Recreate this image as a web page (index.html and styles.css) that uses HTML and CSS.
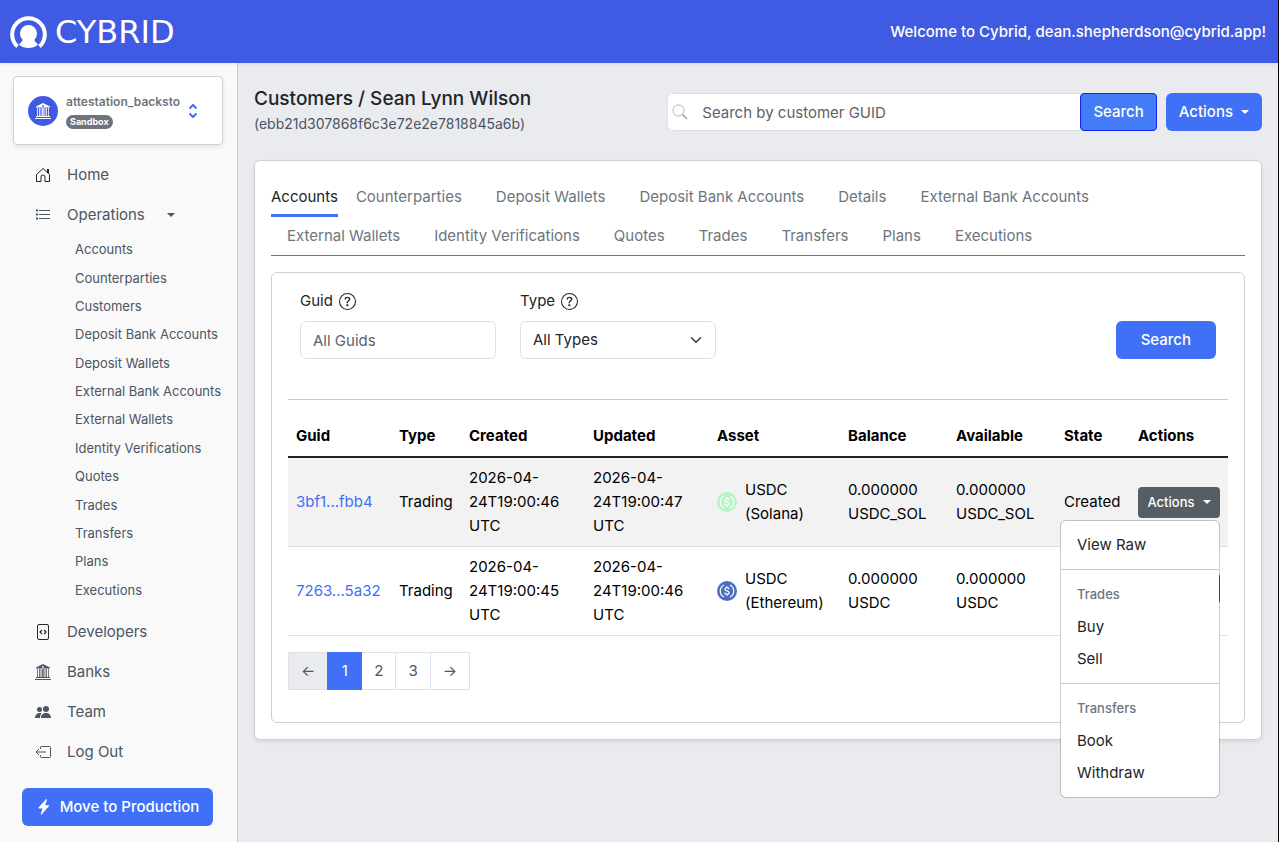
FILE: index.html
```html
<!DOCTYPE html>
<html lang="en">
<head>
    <meta charset="UTF-8">
    <meta name="viewport" content="width=device-width, initial-scale=1.0">
    <title>Cybrid - Customer Accounts</title>
    <link rel="stylesheet" href="styles.css">
</head>
<body>
    <!-- shared shapes -->
    <svg class="sprite" width="0" height="0" aria-hidden="true">
        <symbol id="museum" viewBox="0 0 16 16">
            <path fill="currentColor" fill-rule="evenodd" d="M8 0 15 3.6v1H1v-1zM8 2a.9.9 0 1 0 0 1.8A.9.9 0 0 0 8 2z"/>
            <path fill="none" stroke="currentColor" stroke-width=".8" d="M2.5 5v8M4.500 5v8M6 5v8M7.500 5v8M8.600 5v8M10 5v8M11.500 5v8M13.500 5v8"/>
            <path fill="currentColor" d="M1 13h14v1H1zM0 15h16v1H0z"/>
        </symbol>
        <symbol id="question" viewBox="0 0 16 16">
            <path fill="currentColor" d="M8 15A7 7 0 1 1 8 1a7 7 0 0 1 0 14m0 1A8 8 0 1 0 8 0a8 8 0 0 0 0 16"/>
            <path fill="currentColor" d="M5.255 5.786a.237.237 0 0 0 .241.247h.825c.138 0 .248-.113.266-.25.09-.656.54-1.134 1.342-1.134.686 0 1.314.343 1.314 1.168 0 .635-.374.927-.965 1.371-.673.489-1.206 1.06-1.168 1.987l.003.217a.25.25 0 0 0 .25.246h.811a.25.25 0 0 0 .25-.25v-.105c0-.718.273-.927 1.01-1.486.609-.463 1.244-.977 1.244-2.056 0-1.511-1.276-2.241-2.673-2.241-1.267 0-2.655.59-2.75 2.286m1.557 5.763c0 .533.425.927 1.01.927.609 0 1.028-.394 1.028-.927 0-.552-.42-.94-1.029-.94-.584 0-1.009.388-1.009.94"/>
        </symbol>
        <symbol id="coin" viewBox="0 0 20 20">
            <circle cx="10" cy="10" r="10" fill="currentColor"/>
            <path d="M7 4a6.700 6.700 0 0 0 0 12M13 4a6.700 6.700 0 0 1 0 12" fill="none" stroke="#fff" stroke-width="1.200"/>
            <path d="M12 8.200c0-1-.8-1.500-2-1.500s-2 .5-2 1.500c0 2.200 4.100 1.200 4.100 3.500 0 1-.9 1.600-2.100 1.600s-2.100-.6-2.100-1.700M10 5.300v1.400M10 13.300v1.400" fill="none" stroke="#fff" stroke-width="1.200"/>
        </symbol>
    </svg>

    <header class="topbar">
        <a class="brand" href="#">
            <svg width="37" height="34" viewBox="0 0 37 34" aria-hidden="true">
                <path d="M7.500 31.500A16.300 16.300 0 1 1 29.500 31.500" fill="none" stroke="#fff" stroke-width="4"/>
                <circle cx="18.500" cy="18.500" r="8.500" fill="#fff"/>
                <path d="M13 23C13 27 10 27.500 9 29.800 12 32.300 15 33 18.500 33s6.500-.7 9.500-3.200C27 27.500 24 27 24 23z" fill="#fff"/>
            </svg>
            <span class="brand__name">CYBRID</span>
        </a>
        <p class="welcome">Welcome to Cybrid, dean.shepherdson@cybrid.app!</p>
    </header>

    <div class="layout">
        <aside class="sidebar">
            <button class="org" type="button">
                <span class="org__icon"><svg width="16" height="16"><use href="#museum"/></svg></span>
                <span class="org__text">
                    <span class="org__name">attestation_backsto</span>
                    <span class="badge">Sandbox</span>
                </span>
                <svg class="org__arrows" width="8" height="14" viewBox="0 0 8 14" fill="none" stroke="#3f6ff5" stroke-width="2">
                    <path d="M.5 4.500L4 1l3.500 3.500M.5 9.500L4 13l3.500-3.500"/>
                </svg>
            </button>

            <nav class="menu">
                <a class="menu__link" href="#">
                    <svg width="16" height="16" viewBox="0 0 16 16" fill="none" stroke="#212529"><path d="M1.500 7.500V14.500H6V10a2 2 0 0 1 4 0v4.500h4.500V7.500L8 1.500z"/><path stroke-width="2" d="M13 6V2"/></svg>
                    Home
                </a>
                <a class="menu__link" href="#">
                    <svg width="16" height="16" viewBox="0 0 16 16" fill="none" stroke="currentColor"><path d="M4 3.500h11M4 7.500h11M4 11.500h11"/><path stroke-width="2" d="M1 3.500h2M1 7.500h2M1 11.500h2"/></svg>
                    Operations
                    <span class="caret"></span>
                </a>
                <div class="submenu">
                    <a href="#">Accounts</a>
                    <a href="#">Counterparties</a>
                    <a href="#">Customers</a>
                    <a href="#">Deposit Bank Accounts</a>
                    <a href="#">Deposit Wallets</a>
                    <a href="#">External Bank Accounts</a>
                    <a href="#">External Wallets</a>
                    <a href="#">Identity Verifications</a>
                    <a href="#">Quotes</a>
                    <a href="#">Trades</a>
                    <a href="#">Transfers</a>
                    <a href="#">Plans</a>
                    <a href="#">Executions</a>
                </div>
                <a class="menu__link" href="#">
                    <svg width="16" height="16" viewBox="0 0 16 16" fill="none" stroke="#212529"><rect x="2.500" y=".5" width="11" height="15" rx="1.500"/><path stroke-width="1.200" d="M7 6L5 8l2 2M9 6l2 2-2 2"/></svg>
                    Developers
                </a>
                <a class="menu__link" href="#">
                    <svg width="16" height="16"><use href="#museum"/></svg>
                    Banks
                </a>
                <a class="menu__link" href="#">
                    <svg width="16" height="16" viewBox="0 0 16 16" fill="currentColor"><circle cx="11" cy="5" r="3"/><circle cx="4.500" cy="5.500" r="2.500"/><path d="M6 14c0-3 2-5 5-5s5 2 5 5zM0 14c0-3 2-5 4.500-5 .8 0 1.500.1 2 .4C5.500 10.500 5 12 5 14z"/></svg>
                    Team
                </a>
                <a class="menu__link" href="#">
                    <svg width="16" height="16" viewBox="0 0 16 16" fill="none" stroke="currentColor"><path d="M5.500 5V3a1 1 0 0 1 1-.5h8a1 1 0 0 1 1 1v9a1 1 0 0 1-1 1h-8a1 1 0 0 1-1-1V11M11 8H1M4 5L1 8l3 3"/></svg>
                    Log Out
                </a>
            </nav>

            <button class="btn btn--primary btn--move" type="button">
                <svg width="16" height="16" viewBox="0 0 16 16" fill="currentColor"><path d="M10.700.2a.5.5 0 0 1 .3.600L9.200 6.300h3.500a.5.5 0 0 1 .4.800l-7.500 8.500a.5.5 0 0 1-.8-.500L6.600 9.400H3a.5.5 0 0 1-.4-.800L10 .300a.5.5 0 0 1 .7-.1z"/></svg>
                Move to Production
            </button>
        </aside>

        <main class="content">
            <div class="page-head">
                <div>
                    <h1 class="page-head__title">Customers / Sean Lynn Wilson</h1>
                    <p class="page-head__guid">(ebb21d307868f6c3e72e2e7818845a6b)</p>
                </div>
                <form class="find">
                    <div class="find__box">
                        <svg width="16" height="16" viewBox="0 0 16 16" fill="none" stroke="#adb5bd"><circle cx="6.500" cy="6.500" r="5.500"/><path stroke-width="2" d="M10.500 10.500l4.500 4.500"/></svg>
                        <input type="text" placeholder="Search by customer GUID" aria-label="Search by customer GUID">
                        <button class="btn btn--focus" type="submit">Search</button>
                    </div>
                    <button class="btn btn--primary" type="button">Actions <span class="caret"></span></button>
                </form>
            </div>

            <section class="card">
                <ul class="tabs">
                    <li><a class="tab tab--active" href="#">Accounts</a></li>
                    <li><a class="tab" href="#">Counterparties</a></li>
                    <li><a class="tab" href="#">Deposit Wallets</a></li>
                    <li><a class="tab" href="#">Deposit Bank Accounts</a></li>
                    <li><a class="tab" href="#">Details</a></li>
                    <li><a class="tab" href="#">External Bank Accounts</a></li>
                    <li><a class="tab" href="#">External Wallets</a></li>
                    <li><a class="tab" href="#">Identity Verifications</a></li>
                    <li><a class="tab" href="#">Quotes</a></li>
                    <li><a class="tab" href="#">Trades</a></li>
                    <li><a class="tab" href="#">Transfers</a></li>
                    <li><a class="tab" href="#">Plans</a></li>
                    <li><a class="tab" href="#">Executions</a></li>
                </ul>

                <div class="panel">
                    <form class="filters">
                        <div class="field">
                            <label for="guid">Guid <svg width="17" height="17"><use href="#question"/></svg></label>
                            <input class="control" id="guid" type="text" placeholder="All Guids">
                        </div>
                        <div class="field">
                            <label for="type">Type <svg width="17" height="17"><use href="#question"/></svg></label>
                            <div class="select">
                                <select class="control" id="type">
                                    <option>All Types</option>
                                </select>
                                <svg class="select__arrow" width="16" height="12" viewBox="0 0 16 16" fill="none" stroke="#343a40" stroke-width="2" stroke-linecap="round" stroke-linejoin="round"><path d="M2 5l6 6 6-6"/></svg>
                            </div>
                        </div>
                        <button class="btn btn--primary btn--wide" type="submit">Search</button>
                    </form>

                    <table class="table">
                        <colgroup>
                            <col class="col-guid">
                            <col class="col-type">
                            <col class="col-date">
                            <col class="col-date">
                            <col class="col-asset">
                            <col class="col-amount">
                            <col class="col-amount">
                            <col class="col-state">
                            <col class="col-actions">
                        </colgroup>
                        <thead>
                            <tr>
                                <th>Guid</th>
                                <th>Type</th>
                                <th>Created</th>
                                <th>Updated</th>
                                <th>Asset</th>
                                <th>Balance</th>
                                <th>Available</th>
                                <th>State</th>
                                <th>Actions</th>
                            </tr>
                        </thead>
                        <tbody>
                            <tr class="row--striped">
                                <td><a href="#">3bf1...fbb4</a></td>
                                <td>Trading</td>
                                <td>2026-04-24T19:00:46 UTC</td>
                                <td>2026-04-24T19:00:47 UTC</td>
                                <td>
                                    <div class="asset">
                                        <svg class="coin--solana" width="20" height="20"><use href="#coin"/></svg>
                                        <span>USDC (Solana)</span>
                                    </div>
                                </td>
                                <td>0.000000 USDC_SOL</td>
                                <td>0.000000 USDC_SOL</td>
                                <td>Created</td>
                                <td>
                                    <div class="dropdown">
                                        <button class="btn btn--small" type="button" aria-expanded="true">Actions <span class="caret"></span></button>
                                        <div class="dropdown__menu">
                                            <a class="dropdown__item" href="#">View Raw</a>
                                            <hr>
                                            <h6>Trades</h6>
                                            <a class="dropdown__item" href="#">Buy</a>
                                            <a class="dropdown__item" href="#">Sell</a>
                                            <hr>
                                            <h6>Transfers</h6>
                                            <a class="dropdown__item" href="#">Book</a>
                                            <a class="dropdown__item" href="#">Withdraw</a>
                                        </div>
                                    </div>
                                </td>
                            </tr>
                            <tr>
                                <td><a href="#">7263...5a32</a></td>
                                <td>Trading</td>
                                <td>2026-04-24T19:00:45 UTC</td>
                                <td>2026-04-24T19:00:46 UTC</td>
                                <td>
                                    <div class="asset">
                                        <svg class="coin--ethereum" width="20" height="20"><use href="#coin"/></svg>
                                        <span>USDC (Ethereum)</span>
                                    </div>
                                </td>
                                <td>0.000000 USDC</td>
                                <td>0.000000 USDC</td>
                                <td></td>
                                <td>
                                    <button class="btn btn--small" type="button" aria-label="Actions"></button>
                                </td>
                            </tr>
                        </tbody>
                    </table>

                    <nav class="pagination" aria-label="Pages">
                        <a class="page page--disabled" href="#">←</a>
                        <a class="page page--active" href="#">1</a>
                        <a class="page" href="#">2</a>
                        <a class="page" href="#">3</a>
                        <a class="page" href="#">→</a>
                    </nav>
                </div>
            </section>
        </main>
    </div>
</body>
</html>
```
FILE: styles.css
```css
* {
    box-sizing: border-box;
    margin: 0;
    padding: 0;
}

body {
    display: flex;
    flex-direction: column;
    min-height: 100vh;
    background-color: #eaebef;
    border-right: 1px solid #000;
    font-family: Inter, 'Liberation Sans', sans-serif;
    font-size: 15px;
    line-height: 24px;
    color: #212529;
}

a {
    color: inherit;
    text-decoration: none;
}

svg {
    display: block;
    flex-shrink: 0;
}

button,
input,
select {
    font: inherit;
}

.sprite {
    position: absolute;
}

/* Top bar */
.topbar {
    position: relative;
    display: flex;
    justify-content: space-between;
    align-items: center;
    height: 63px;
    padding: 0 12px 0 10px;
    background-color: #3f5be3;
    box-shadow: 0 2px 4px rgba(0, 0, 0, 0.06);
    color: #fff;
}

.brand {
    display: flex;
    align-items: center;
    gap: 8px;
}

.brand__name {
    font-family: 'DejaVu Sans', sans-serif;
    font-size: 32px;
    line-height: 32px;
}

.welcome {
    font-weight: 500;
}

/* Sidebar */
.layout {
    display: flex;
    flex: 1;
}

.sidebar {
    flex: 0 0 238px;
    padding: 13px 14px 16px 13px;
    background-color: #f9f9f9;
    border-right: 1px solid #c9cacc;
}

.org {
    display: flex;
    align-items: center;
    gap: 8px;
    width: 100%;
    height: 69px;
    padding: 0 14px;
    background-color: #fff;
    border: 1px solid #d0d1d2;
    border-radius: 4px;
    box-shadow: 0 2px 4px rgba(0, 0, 0, 0.08);
    text-align: left;
}

.org__icon {
    display: flex;
    justify-content: center;
    align-items: center;
    width: 30px;
    height: 30px;
    border-radius: 50%;
    background-color: #3f5be3;
    color: #fff;
}

.org__text {
    display: flex;
    flex-direction: column;
    align-items: flex-start;
    gap: 4px;
    width: 114px;
}

.org__name {
    width: 100%;
    overflow: hidden;
    white-space: nowrap;
    font-size: 12px;
    font-weight: 600;
    line-height: 18px;
    color: #6c757d;
}

.badge {
    padding: 0 4px;
    border-radius: 7px;
    background-color: #6c757d;
    color: #fff;
    font-size: 9px;
    font-weight: 700;
    line-height: 14px;
}

.org__arrows {
    margin-left: 1px;
}

.menu {
    padding: 10px 0 16px;
    color: #4b5563;
}

.menu__link {
    display: flex;
    align-items: center;
    gap: 16px;
    height: 40px;
    padding-left: 22px;
}

.caret {
    display: inline-block;
    border-top: 4px solid;
    border-left: 4px solid transparent;
    border-right: 4px solid transparent;
}

.menu__link .caret {
    margin-left: 6px;
}

.submenu {
    display: grid;
    grid-auto-rows: 1fr;
    align-items: center;
    min-height: 369px;
    margin-bottom: 8px;
    padding-left: 62px;
    font-size: 13px;
    line-height: 20px;
    white-space: nowrap;
}

/* Buttons */
.btn {
    display: inline-flex;
    justify-content: center;
    align-items: center;
    gap: 8px;
    height: 38px;
    padding: 0 12px;
    border: 1px solid transparent;
    border-radius: 6px;
    color: #fff;
    font-weight: 500;
    white-space: nowrap;
    cursor: pointer;
}

.btn--primary {
    background-color: #3f70f5;
}

.btn--focus {
    background-color: #437cf6;
    border-color: #1325e6;
    border-radius: 4px;
}

.btn--wide {
    margin-left: auto;
    padding: 0 24px;
}

.btn--move {
    width: 191px;
    margin-left: 9px;
}

.btn--small {
    width: 82px;
    height: 31px;
    padding: 0 8px;
    border-radius: 4px;
    background-color: #565e64;
    font-size: 13px;
}

/* Page head */
.content {
    flex: 1;
    min-width: 0;
    padding: 24px 16px;
}

.page-head {
    display: flex;
    justify-content: space-between;
    align-items: center;
    margin-bottom: 23px;
}

.page-head__title {
    font-size: 19px;
    font-weight: 500;
    line-height: 24px;
}

.page-head__guid {
    font-size: 14px;
    line-height: 26px;
    color: #4b5563;
}

.find {
    display: flex;
    gap: 9px;
    width: 59%;
}

.find__box {
    display: flex;
    align-items: center;
    flex: 1;
    height: 38px;
    padding-left: 5px;
    background-color: #fff;
    border-radius: 6px;
    box-shadow: inset 0 0 0 1px #dee2e6;
}

.find__box input {
    flex: 1;
    min-width: 0;
    height: 36px;
    padding: 0 14px;
    border: none;
    background: none;
    outline: none;
}

input::placeholder {
    color: #5c6168;
}

/* Card and tabs */
.card {
    padding: 16px;
    background-color: #fff;
    border: 1px solid #cfd0d2;
    border-radius: 6px;
    box-shadow: 0 2px 4px rgba(0, 0, 0, 0.08);
}

.tabs {
    display: flex;
    flex-wrap: wrap;
    column-gap: 2px;
    margin-bottom: 16px;
    border-bottom: 1px solid #6c757d;
    list-style: none;
}

.tabs li {
    margin-bottom: -1px;
}

.tab {
    display: block;
    height: 40px;
    padding: 8px 16px;
    color: #6c757d;
}

.tab--active {
    padding: 8px 0;
    border-bottom: 3px solid #3f70f5;
    color: #212529;
}

.panel {
    padding: 16px 16px 32px;
    border: 1px solid #cfd0d2;
    border-radius: 6px;
}

/* Filters */
.filters {
    display: flex;
    align-items: flex-end;
    gap: 24px;
    margin-bottom: 16px;
    padding: 0 12px 40px;
    border-bottom: 1px solid #c8c9ca;
}

.field {
    width: 196px;
}

.field label {
    display: flex;
    align-items: center;
    gap: 6px;
    margin-bottom: 8px;
}

.control {
    display: block;
    width: 100%;
    height: 38px;
    padding: 0 12px;
    border: 1px solid #dee2e6;
    border-radius: 6px;
    background-color: #fff;
    color: #212529;
    appearance: none;
}

.select {
    position: relative;
}

.select__arrow {
    position: absolute;
    top: 13px;
    right: 12px;
    pointer-events: none;
}

/* Table */
.table {
    width: 100%;
    margin-bottom: 16px;
    border-collapse: separate;
    border-spacing: 0;
    table-layout: fixed;
    color: #000;
}

.col-guid { width: 103px; }
.col-type { width: 70px; }
.col-date { width: 124px; }
.col-asset { width: 131px; }
.col-amount { width: 108px; }
.col-state { width: 74px; }
.col-actions { width: 98px; }

.table th,
.table td {
    padding: 8px;
    text-align: left;
    vertical-align: middle;
}

.table th {
    border-bottom: 2px solid #212529;
    font-weight: 700;
}

.table td {
    border-bottom: 1px solid #dee2e6;
}

.table td > a {
    color: #3f70f5;
}

.row--striped td {
    background-color: #f2f2f2;
}

.asset {
    display: flex;
    align-items: center;
    gap: 8px;
}

.coin--solana {
    color: #b5f5c4;
}

.coin--ethereum {
    color: #4a70bd;
}

/* Dropdown */
.dropdown {
    position: relative;
    width: 82px;
}

.dropdown .btn {
    display: flex;
}

.dropdown__menu {
    position: absolute;
    top: 33px;
    right: 0;
    z-index: 1;
    width: 160px;
    padding: 8px 0;
    background-color: #fff;
    background-clip: padding-box;
    border: 1px solid rgba(0, 0, 0, 0.2);
    border-radius: 6px;
    color: #212529;
}

.dropdown__menu hr {
    margin: 8px 0;
    border: none;
    border-top: 1px solid #c8c9ca;
}

.dropdown__menu h6 {
    padding: 8px 16px;
    font-size: 13px;
    font-weight: 500;
    line-height: 17px;
    color: #6c757d;
}

.dropdown__item {
    display: block;
    padding: 4px 16px;
}

/* Pagination */
.pagination {
    display: flex;
}

.page {
    min-width: 35px;
    height: 38px;
    padding: 6px 12px;
    border: 1px solid #dee2e6;
    background-color: #fff;
    color: #4b5563;
    text-align: center;
}

.page + .page {
    margin-left: -1px;
}

.page--disabled {
    background-color: #e9ebee;
}

.page--active {
    z-index: 1;
    border-color: #3f70f5;
    background-color: #3f70f5;
    color: #fff;
}
```
